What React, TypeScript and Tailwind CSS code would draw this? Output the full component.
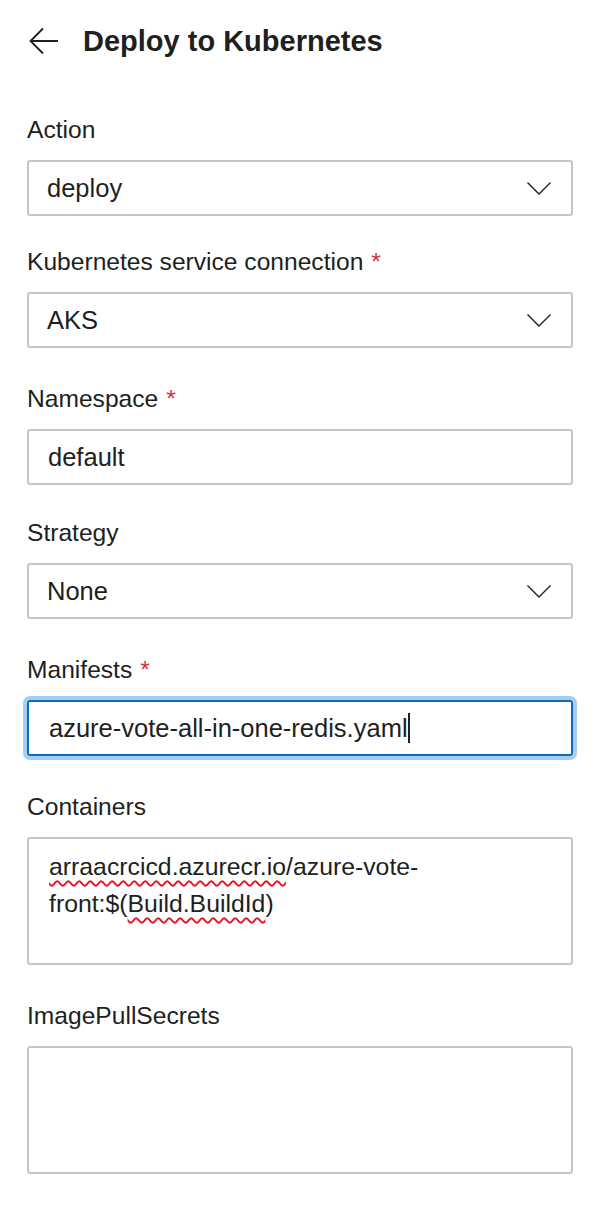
import { ReactNode } from 'react';

const font = { fontFamily: '"Liberation Sans", Arial, sans-serif' };

function Chevron() {
  return (
    <svg width="26" height="14" viewBox="0 0 26 14" fill="none" stroke="#201f1e" strokeWidth="1.4">
      <path d="M1.5 1.5l11.5 11.5L24.5 1.5" />
    </svg>
  );
}

function Label({ text, required }: { text: string; required?: boolean }) {
  return (
    <div className="text-[24.6px] leading-[32px] text-[#201f1e]">
      {text}
      {required && <span className="ml-[8px] text-[#d13438]">*</span>}
    </div>
  );
}

function Field({
  label,
  required,
  className,
  children,
}: {
  label: string;
  required?: boolean;
  className?: string;
  children: ReactNode;
}) {
  return (
    <div className={`flex flex-col gap-[14px] ${className ?? ''}`}>
      <Label text={label} required={required} />
      {children}
    </div>
  );
}

function Select({ value }: { value: string }) {
  return (
    <div className="flex h-[56px] items-center justify-between rounded-[3px] border-2 border-[#c8c6c4] pl-[18px] pr-[19px]">
      <span className="text-[25.5px] text-[#201f1e]">{value}</span>
      <Chevron />
    </div>
  );
}

function TextInput({ value }: { value: string }) {
  return (
    <div className="flex h-[56px] items-center rounded-[3px] border-2 border-[#c8c6c4] pl-[19px]">
      <span className="text-[25.5px] text-[#201f1e]">{value}</span>
    </div>
  );
}

const squiggle = 'underline decoration-wavy decoration-[#e81123] decoration-[1.5px] underline-offset-[5px]';

export default function App() {
  return (
    <div className="min-h-[1205px] w-[596px] bg-white" style={font}>
      {/* Header */}
      <div className="flex items-center gap-[24px] pl-[29px] pt-[26px]">
        <svg width="30" height="28" viewBox="0 0 30 28" fill="none" stroke="#201f1e" strokeWidth="1.8">
          <path d="M29 14H2M14 1.5L1.5 14L14 26.5" />
        </svg>
        <h1 className="text-[29px] font-bold leading-[30px] text-[#201f1e]">Deploy to Kubernetes</h1>
      </div>

      {/* Form */}
      <div className="ml-[27px] mr-[23px] mt-[58px] flex flex-col">
        <Field label="Action">
          <Select value="deploy" />
        </Field>
        <Field label="Kubernetes service connection" required className="mt-[30px]">
          <Select value="AKS" />
        </Field>
        <Field label="Namespace" required className="mt-[35px]">
          <TextInput value="default" />
        </Field>
        <Field label="Strategy" className="mt-[32px]">
          <Select value="None" />
        </Field>
        <Field label="Manifests" required className="mt-[35px]">
          <div className="flex h-[56px] items-center rounded-[3px] border-2 border-[#0f6cbd] pl-[20px] shadow-[0_0_0_4px_#a5cdf0]">
            <span className="text-[25.5px] text-[#201f1e]">azure-vote-all-in-one-redis.yaml</span>
            <span className="h-[30px] w-[2px] bg-[#201f1e]" />
          </div>
        </Field>
        <Field label="Containers" className="mt-[35px]">
          <div className="h-[128px] rounded-[3px] border-2 border-[#c8c6c4] pl-[20px] pr-[20px] pt-[9px] text-[24.8px] leading-[37px] text-[#201f1e]">
            <span className={squiggle}>arraacrcicd.azurecr.io</span>/azure-vote-
            <br />
            front:$(<span className={squiggle}>Build.BuildId</span>)
          </div>
        </Field>
        <Field label="ImagePullSecrets" className="mt-[35px]">
          <div className="h-[128px] rounded-[3px] border-2 border-[#c8c6c4]" />
        </Field>
      </div>
    </div>
  );
}
